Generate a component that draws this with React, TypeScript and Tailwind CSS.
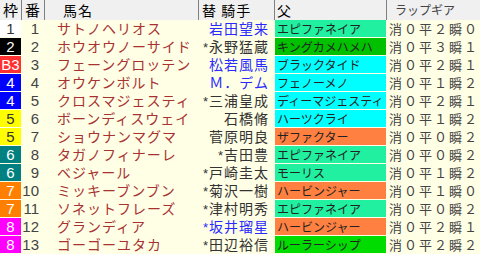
import React from 'react';

interface Horse {
  waku: string;
  num: number;
  name: string;
  jockey: string;
  mark: boolean;
  blue: boolean;
  sire: string;
  sireBg: string;
  lap: string;
}

const wakuStyle: Record<string, string> = {
  '1': 'bg-white text-[#333]',
  '2': 'bg-black text-white',
  B3: 'bg-[#ff3030] text-white',
  '4': 'bg-[#0000ff] text-white',
  '5': 'bg-[#ffff00] text-[#333]',
  '6': 'bg-[#008080] text-white',
  '7': 'bg-[#ff8000] text-white',
  '8': 'bg-[#ff00ff] text-white',
};

const horses: Horse[] = [
  { waku: '1', num: 1, name: 'サトノヘリオス', jockey: '岩田望来', mark: false, blue: true, sire: 'エピファネイア', sireBg: 'bg-[#20f0a0]', lap: '消０平２瞬０' },
  { waku: '2', num: 2, name: 'ホウオウノーサイド', jockey: '永野猛蔵', mark: true, blue: false, sire: 'キングカメハメハ', sireBg: 'bg-[#00c000]', lap: '消０平３瞬１' },
  { waku: 'B3', num: 3, name: 'フェーングロッテン', jockey: '松若風馬', mark: false, blue: true, sire: 'ブラックタイド', sireBg: 'bg-[#00ffff]', lap: '消０平２瞬１' },
  { waku: '4', num: 4, name: 'オウケンボルト', jockey: 'Ｍ．デム', mark: false, blue: true, sire: 'フェノーメノ', sireBg: 'bg-[#00ffff]', lap: '消０平１瞬２' },
  { waku: '4', num: 5, name: 'クロスマジェスティ', jockey: '三浦皇成', mark: true, blue: false, sire: 'ディーマジェスティ', sireBg: 'bg-[#00ffff]', lap: '消０平２瞬１' },
  { waku: '5', num: 6, name: 'ボーンディスウェイ', jockey: '石橋脩', mark: false, blue: false, sire: 'ハーツクライ', sireBg: 'bg-[#00ffff]', lap: '消０平１瞬２' },
  { waku: '5', num: 7, name: 'ショウナンマグマ', jockey: '菅原明良', mark: false, blue: false, sire: 'ザファクター', sireBg: 'bg-[#ff8040]', lap: '消０平０瞬２' },
  { waku: '6', num: 8, name: 'タガノフィナーレ', jockey: '吉田豊', mark: true, blue: false, sire: 'エピファネイア', sireBg: 'bg-[#20f0a0]', lap: '消０平０瞬２' },
  { waku: '6', num: 9, name: 'ベジャール', jockey: '戸崎圭太', mark: true, blue: false, sire: 'モーリス', sireBg: 'bg-[#20f0a0]', lap: '消０平１瞬２' },
  { waku: '7', num: 10, name: 'ミッキーブンブン', jockey: '菊沢一樹', mark: true, blue: false, sire: 'ハービンジャー', sireBg: 'bg-[#ff8040]', lap: '消０平１瞬０' },
  { waku: '7', num: 11, name: 'ソネットフレーズ', jockey: '津村明秀', mark: true, blue: false, sire: 'エピファネイア', sireBg: 'bg-[#20f0a0]', lap: '消０平０瞬２' },
  { waku: '8', num: 12, name: 'グランディア', jockey: '坂井瑠星', mark: true, blue: true, sire: 'ハービンジャー', sireBg: 'bg-[#ff8040]', lap: '消０平２瞬１' },
  { waku: '8', num: 13, name: 'ゴーゴーユタカ', jockey: '田辺裕信', mark: true, blue: false, sire: 'ルーラーシップ', sireBg: 'bg-[#00dc00]', lap: '消０平２瞬２' },
];

const jp = "font-['Noto_Sans_CJK_JP',sans-serif]";
const num = "font-['Liberation_Sans',sans-serif]";

export default function App() {
  return (
    <div className="w-[480px] h-[254px] overflow-hidden bg-[#ffffe6] grid grid-cols-[22px_23px_154px_76px_112px_93px] grid-rows-[20px_repeat(13,18px)]">
      {/* header */}
      <div className={`${jp} bg-[#f0f0f0] border-r border-[#808080] text-[15px] leading-[20px] text-black pl-[3px] overflow-hidden`}>枠</div>
      <div className={`${jp} bg-[#f0f0f0] border-r border-[#808080] text-[15px] leading-[20px] text-black pl-[3px] overflow-hidden`}>番</div>
      <div className={`${jp} bg-[#f0f0f0] border-r border-[#808080] text-[14px] leading-[20px] text-black pl-[18px] tracking-[1px] overflow-hidden`}>馬名</div>
      <div className={`${jp} bg-[#f0f0f0] border-r border-[#808080] text-[14px] leading-[20px] text-black pl-[3px] tracking-[1px] whitespace-pre overflow-hidden`}>替 騎手</div>
      <div className={`${jp} bg-[#f0f0f0] border-r border-[#808080] text-[14px] leading-[20px] text-black pl-[2px] overflow-hidden`}>父</div>
      <div className={`${jp} bg-[#f0f0f0] text-[12px] leading-[20px] text-[#444] pl-[8px] overflow-hidden`}>ラップギア</div>

      {horses.map(h => (
        <React.Fragment key={h.num}>
          <div className="pr-px pb-px">
            <div className={`${num} ${wakuStyle[h.waku]} h-full text-[15px] leading-[17px] text-center overflow-hidden`}>{h.waku}</div>
          </div>
          <div className={`${num} text-[15px] leading-[17px] text-[#444] text-right pr-[6px] overflow-hidden`}>{h.num}</div>
          <div className={`${jp} text-[14px] leading-[17px] text-[#a83232] pl-[12px] tracking-[1px] whitespace-nowrap overflow-hidden`}>{h.name}</div>
          <div className={`${jp} text-[14px] leading-[17px] text-right pr-[6px] whitespace-nowrap overflow-hidden ${h.blue ? 'text-[#2a2aff]' : 'text-[#333]'}`}>
            {h.mark && <span className={`${num} text-[13px] mr-[1px]`}>*</span>}
            <span className="tracking-[1px]">{h.jockey}</span>
          </div>
          <div className="pr-px pb-px">
            <div className={`${jp} ${h.sireBg} h-full text-[12px] leading-[17px] text-[#222] pl-[2px] whitespace-nowrap overflow-hidden`}>{h.sire}</div>
          </div>
          <div className={`${jp} text-[13px] leading-[17px] text-[#444] pl-[2px] tracking-[2px] whitespace-nowrap overflow-hidden`}>{h.lap}</div>
        </React.Fragment>
      ))}
    </div>
  );
}
